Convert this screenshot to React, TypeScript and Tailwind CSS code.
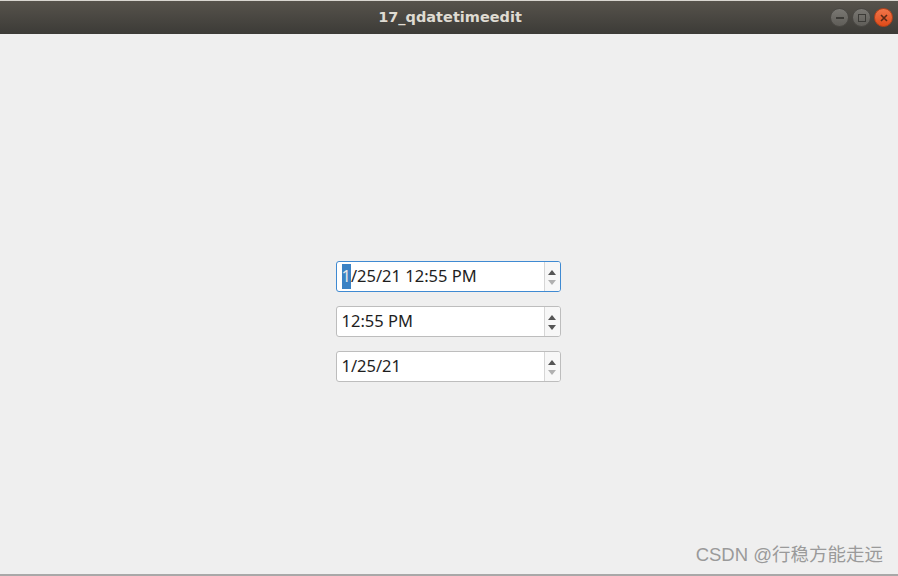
import React from "react";

function Arrows({ downEnabled }: { downEnabled: boolean }) {
  return (
    <div className="flex w-[16px] flex-col items-center justify-center border-l border-[#d6d6d6] bg-[#f7f7f7]">
      <svg width="10" height="24" viewBox="0 0 10 24">
        <polygon points="1,10 9,10 5,5" fill="#555" />
        <polygon points="1,15 9,15 5,20" fill={downEnabled ? "#555" : "#b0b0b0"} />
      </svg>
    </div>
  );
}

function SpinBox({
  children,
  focused,
  downEnabled,
}: {
  children: React.ReactNode;
  focused?: boolean;
  downEnabled: boolean;
}) {
  return (
    <div
      className={
        "flex h-[31px] w-[225px] overflow-hidden rounded-[3px] border bg-white " +
        (focused ? "border-[#3f8ad2]" : "border-[#bdbdbd]")
      }
    >
      <div className="flex flex-1 items-center pl-[5px] text-[16.5px] text-[#1e1e1e]">{children}</div>
      <Arrows downEnabled={downEnabled} />
    </div>
  );
}

export default function App() {
  return (
    <div
      className="flex h-[576px] w-[898px] flex-col overflow-hidden bg-[#efefef]"
      style={{ fontFamily: '"Noto Sans", "DejaVu Sans", sans-serif' }}
    >
      <div className="h-[1px] bg-[#d9d6d0]" />
      <div className="relative flex h-[33px] items-center justify-center bg-gradient-to-b from-[#57534c] to-[#3c3b37]">
        <span className="pl-[2px] text-[14.5px] font-bold text-[#dfdbd2]" style={{ fontFamily: '"DejaVu Sans", sans-serif' }}>
          17_qdatetimeedit
        </span>
        <div className="absolute right-[5px] top-[7px] flex gap-[3px]">
          <div className="flex h-[19px] w-[19px] items-center justify-center rounded-full bg-gradient-to-b from-[#7a7873] to-[#5f5d58] border border-[#4a4844]">
            <div className="h-[2px] w-[8px] bg-[#3c3b37]" />
          </div>
          <div className="flex h-[19px] w-[19px] items-center justify-center rounded-full bg-gradient-to-b from-[#7a7873] to-[#5f5d58] border border-[#4a4844]">
            <div className="h-[8px] w-[8px] border-[1.5px] border-[#3c3b37]" />
          </div>
          <div className="flex h-[19px] w-[19px] items-center justify-center rounded-full bg-gradient-to-b from-[#f07548] to-[#df4a16] border border-[#b8421a]">
            <svg width="8" height="8" viewBox="0 0 8 8">
              <path d="M1 1 L7 7 M7 1 L1 7" stroke="#5a2a16" strokeWidth="1.6" />
            </svg>
          </div>
        </div>
      </div>
      <div className="relative flex flex-1 flex-col items-center pt-[227px] pr-[2px] gap-[14px]">
        <SpinBox focused downEnabled={false}>
          <span className="bg-[#3b82c4] text-[#e8e8e8]">1</span>
          <span>/25/21 12:55 PM</span>
        </SpinBox>
        <SpinBox downEnabled>
          <span>12:55 PM</span>
        </SpinBox>
        <SpinBox downEnabled={false}>
          <span>1/25/21</span>
        </SpinBox>
        <div
          className="absolute bottom-[5px] right-[15px] text-[18.5px] text-[#9a9a9a]"
          style={{ fontFamily: '"Liberation Sans", "Noto Sans CJK SC", sans-serif' }}
        >
          CSDN @行稳方能走远
        </div>
      </div>
      <div className="h-[2px] bg-[#a8a8a8]" />
    </div>
  );
}
